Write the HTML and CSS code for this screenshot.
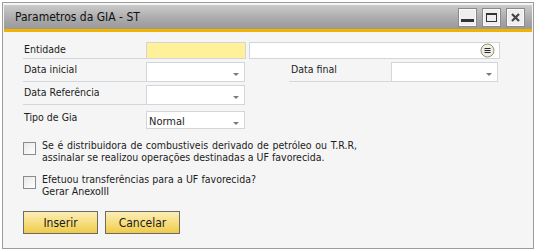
FILE: index.html
```html
<!DOCTYPE html>
<html lang="pt">
<head>
    <meta charset="utf-8">
    <title>Parametros da GIA - ST</title>
    <link rel="stylesheet" href="styles.css">
</head>
<body>

<div class="window">
    <div class="titlebar">
        <span class="title">Parametros da GIA - ST</span>
        <div class="wbtns">
            <span class="wbtn"><svg width="13" height="13" viewBox="0 0 13 13"><rect x="0" y="8" width="13" height="3" fill="#333"/></svg></span>
            <span class="wbtn"><svg width="13" height="13" viewBox="0 0 13 13"><rect x="1.5" y="2.5" width="10" height="8" fill="none" stroke="#333" stroke-width="1"/><rect x="1" y="2" width="11" height="2" fill="#333"/></svg></span>
            <span class="wbtn"><svg width="13" height="13" viewBox="0 0 13 13"><path d="M3 3 L10 10 M10 3 L3 10" stroke="#444" stroke-width="2.2"/></svg></span>
        </div>
    </div>

    <div class="content">
        <div class="row r1">
            <div class="label">Entidade</div>
            <div class="field yellow"></div>
            <div class="field wide">
                <svg class="pick" width="15" height="15" viewBox="0 0 15 15">
                    <circle cx="7.5" cy="7.5" r="6.5" fill="#f1efdc" stroke="#8d8d85" stroke-width="1"/>
                    <path d="M4.5 5.5 H10.5 M4.5 7.5 H10.5 M4.5 9.5 H10.5" stroke="#1f2a44" stroke-width="1.2"/>
                </svg>
            </div>
        </div>
        <div class="row r2">
            <div class="label">Data inicial</div>
            <div class="field drop"><span class="arrow"></span></div>
            <div class="label short">Data final</div>
            <div class="field drop right"><span class="arrow"></span></div>
        </div>
        <div class="row r3">
            <div class="label">Data Referência</div>
            <div class="field drop"><span class="arrow"></span></div>
        </div>
        <div class="row r4">
            <div class="label plain">Tipo de Gia</div>
            <div class="field drop"><span class="val">Normal</span><span class="arrow"></span></div>
        </div>

        <div class="check c1">
            <span class="box"></span>
            <div class="ctext">
                <span class="jline l1">Se é distribuidora de combustiveis derivado de petróleo ou T.R.R,</span>
                <span class="jline">assinalar se realizou operações destinadas a UF favorecida.</span>
            </div>
        </div>
        <div class="check c2">
            <span class="box"></span>
            <div class="ctext">
                <span class="jline l2">Efetuou transferências para a UF favorecida?</span>
                <span class="jline">Gerar AnexoIII</span>
            </div>
        </div>

        <div class="actions">
            <button class="btn">Inserir</button>
            <button class="btn">Cancelar</button>
        </div>
    </div>
</div>

</body>
</html>
```

FILE: styles.css
```css
body {
    margin: 0;
    background: #ffffff;
    font-family: "DejaVu Sans Condensed", "DejaVu Sans", sans-serif;
    font-size: 10.5px;
    color: #1c1c1c;
}
.window {
    margin: 2px 0 0 2px;
    width: 530px;
    height: 245px;
    border: 1px solid #9c9c9c;
    background: #f5f5f5;
    display: flex;
    flex-direction: column;
}
.titlebar {
    height: 24px;
    margin: 2px 1px 0 1px;
    background: linear-gradient(#cbcbcb, #a9a9a9 60%, #999999);
    border-bottom: 3px solid #f2b300;
    display: flex;
    align-items: center;
    justify-content: space-between;
}
.title {
    padding-left: 11px;
    font-size: 12px;
    color: #111;
}
.wbtns {
    display: flex;
    gap: 5px;
    padding-right: 7px;
}
.wbtn {
    width: 17px;
    height: 17px;
    border: 1px solid #8a8a8a;
    background: #eeeeee;
    box-shadow: inset 0 0 0 1px #fafafa;
    display: flex;
    align-items: center;
    justify-content: center;
}
.content {
    padding: 10px 0 0 20px;
    flex: 1;
}
.row {
    display: flex;
    align-items: flex-end;
}
.r1 { height: 17px; }
.r2 { height: 20px; margin-top: 3px; }
.r3 { height: 20px; margin-top: 3px; }
.r4 { height: 18px; margin-top: 6px; }
.label {
    width: 123px;
    height: 100%;
    box-sizing: border-box;
    border-bottom: 1px solid #d3d7db;
    padding: 1px 0 0 1px;
}
.label.plain {
    border-bottom: none;
    padding-top: 0;
}
.label.short {
    width: 102px;
    margin-left: 44px;
    padding-left: 2px;
}
.field {
    position: relative;
    height: 100%;
    width: 99px;
    box-sizing: border-box;
    border: 1px solid #d1d6db;
    background: #ffffff;
}
.yellow {
    background: #fff09a;
    width: 100px;
}
.wide {
    width: 251px;
    margin-left: 3px;
}
.right {
    width: 107px;
}
.pick {
    position: absolute;
    right: 4px;
    top: 0;
}
.arrow {
    position: absolute;
    right: 5px;
    top: 10px;
    border-left: 3px solid transparent;
    border-right: 3px solid transparent;
    border-top: 3px solid #7a7a7a;
}
.val {
    display: block;
    padding: 3px 0 0 2px;
    font-size: 11px;
}
.check {
    display: flex;
    gap: 6px;
}
.c1 { margin-top: 10px; }
.c2 { margin-top: 10px; }
.box {
    width: 11px;
    height: 11px;
    margin-top: 3px;
    border: 1px solid #8b8b8b;
    background: linear-gradient(135deg, #e8e8e8, #ffffff);
}
.ctext {
    line-height: 12px;
}
.jline {
    display: block;
    word-spacing: 0;
}
.l1 {
    width: 315px;
    text-align: justify;
    text-align-last: justify;
}
.l2 {
    width: 214px;
    text-align: justify;
    text-align-last: justify;
}
.actions {
    display: flex;
    gap: 7px;
    margin-top: 14px;
}
.btn {
    width: 75px;
    height: 23px;
    border: 1px solid #6b6b6b;
    background: linear-gradient(#fbeeb6, #f5d76a 70%, #efc94a);
    font-family: "DejaVu Sans Condensed", "DejaVu Sans", sans-serif;
    font-size: 12px;
    color: #1a1a1a;
    padding: 0;
}
```
